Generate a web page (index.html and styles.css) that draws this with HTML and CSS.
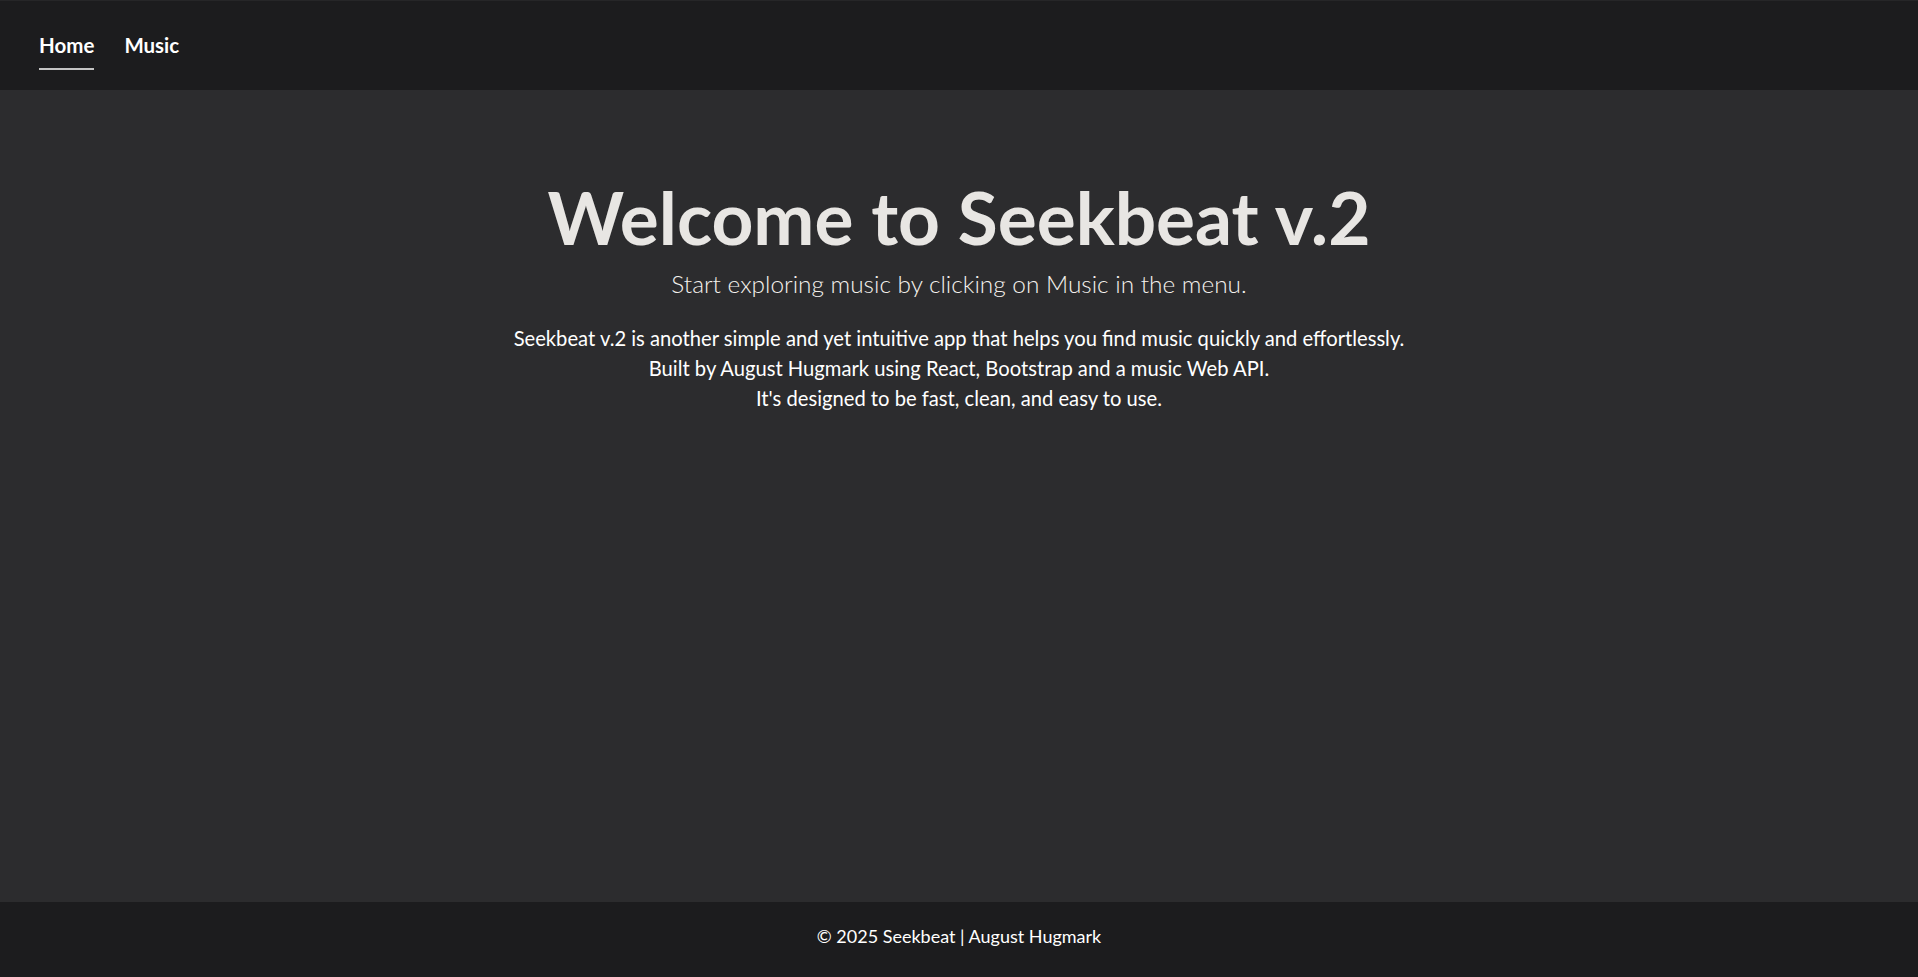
FILE: index.html
```html
<!DOCTYPE html>
<html lang="en">
<head>
<meta charset="utf-8">
<title>Seekbeat v.2</title>
<link rel="stylesheet" href="styles.css">
</head>
<body>
<div class="app">
  <nav class="navbar">
    <a class="nav-link active" href="#">Home</a>
    <a class="nav-link" href="#">Music</a>
  </nav>
  <main class="main">
    <h1 class="title">Welcome to Seekbeat v.2</h1>
    <p class="lead">Start exploring music by clicking on Music in the menu.</p>
    <p class="about">Seekbeat v.2 is another simple and yet intuitive app that helps you find music quickly and effortlessly.<br>Built by August Hugmark using React, Bootstrap and a music Web API.<br>It's designed to be fast, clean, and easy to use.</p>
  </main>
  <footer class="footer">© 2025 Seekbeat | August Hugmark</footer>
</div>
</body>
</html>
```

FILE: styles.css
```css
html, body {
  margin: 0;
  padding: 0;
}
body {
  font-family: "Lato", "Open Sans", sans-serif;
  background: #2c2c2e;
  color: #fff;
}
.app {
  display: flex;
  flex-direction: column;
  min-height: 100vh;
}
.navbar {
  height: 90px;
  box-sizing: border-box;
  border-top: 1px solid #262628;
  background: #1c1c1e;
  display: flex;
  align-items: flex-start;
  gap: 30px;
  padding: 30px 0 0 39px;
}
.nav-link {
  color: #fff;
  text-decoration: none;
  font-size: 20.5px;
  font-weight: 700;
  line-height: 28px;
  padding-bottom: 9px;
  border-bottom: 2px solid transparent;
}
.nav-link.active {
  border-bottom-color: #c4c4c4;
}
.main {
  flex: 1;
  display: flex;
  flex-direction: column;
  align-items: center;
  text-align: center;
  padding-top: 83px;
}
.title {
  margin: 0;
  font-size: 73px;
  font-weight: 700;
  line-height: 88px;
  color: #e8e6e3;
}
.lead {
  margin: 8px 0 0;
  font-size: 24.4px;
  font-weight: 300;
  line-height: 30px;
  color: #f4f1ed;
}
.about {
  margin: 24px 0 0;
  font-size: 20.2px;
  line-height: 30px;
  color: #fff;
}
.footer {
  height: 75px;
  box-sizing: border-box;
  background: #1c1c1e;
  display: flex;
  align-items: flex-start;
  justify-content: center;
  padding-top: 22px;
  font-size: 18px;
  line-height: 24px;
  color: #fff;
}
```
